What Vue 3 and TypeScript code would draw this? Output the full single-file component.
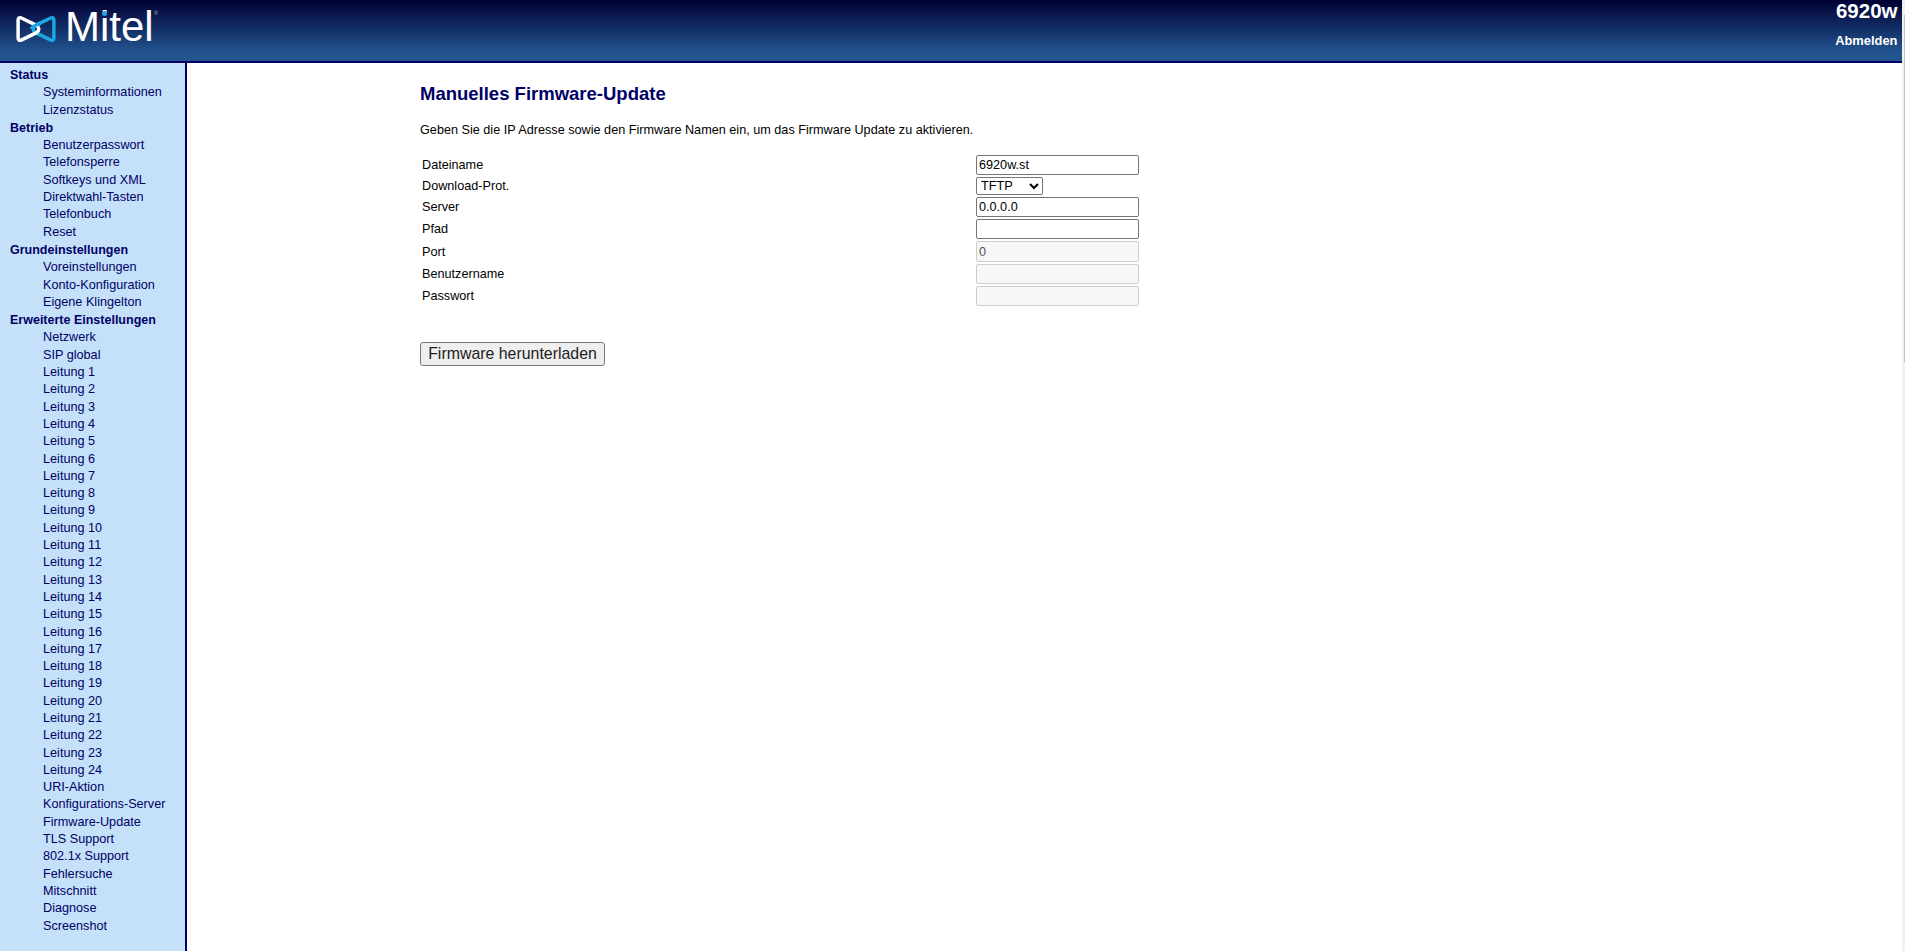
<template>
  <div class="page">
    <div class="window">
      <header class="topbar">
        <div class="logo">
          <svg class="logo-mark" width="40" height="30" viewBox="0 0 38 28" fill="none">
            <path d="M33 3.500L18.500 10.500Q14 14 18.500 17.500L33 24.500Q36 25.500 36 22.500V5.500Q36 2.500 33 3.500Z" stroke="#1ba7e0" stroke-width="3.300" />
            <path d="M5 3.500L19.500 10.500Q24 14 19.500 17.500L5 24.500Q2 25.500 2 22.500V5.500Q2 2.500 5 3.500Z" stroke="#fff" stroke-width="3.300" />
            <path d="M14.800 14Q15 12.200 18.500 10.500L24 7.900" stroke="#1ba7e0" stroke-width="3.300" />
          </svg>
          <div class="logo-word">
            <span class="logo-text">Mitel</span>
            <i class="logo-dot"></i>
          </div>
          <span class="logo-reg">®</span>
        </div>
        <div class="device">
          <div class="model">6920w</div>
          <a class="logout">Abmelden</a>
        </div>
      </header>

      <div class="body">
        <nav class="sidebar">
          <div v-for="group in menu" :key="group.title" class="group">
            <div class="group-title">{{ group.title }}</div>
            <a v-for="item in group.items" :key="item" class="item">{{ item }}</a>
          </div>
        </nav>

        <main class="content">
          <h1>Manuelles Firmware-Update</h1>
          <p class="intro">
            Geben Sie die IP Adresse sowie den Firmware Namen ein, um das Firmware Update zu aktivieren.
          </p>

          <div class="form">
            <label>Dateiname</label>
            <input value="6920w.st" />
            <label>Download-Prot.</label>
            <select>
              <option>TFTP</option>
            </select>
            <label>Server</label>
            <input value="0.0.0.0" />
            <label>Pfad</label>
            <input value="" />
            <label>Port</label>
            <input class="port" value="0" disabled />
            <label>Benutzername</label>
            <input value="" disabled />
            <label>Passwort</label>
            <input value="" disabled />
          </div>

          <button class="download">Firmware herunterladen</button>
        </main>
      </div>
    </div>

    <!-- Rest der Scrollleiste am rechten Rand -->
    <div class="scroll-track">
      <div class="scroll-thumb"></div>
    </div>
  </div>
</template>

<script setup lang="ts">
interface MenuGroup {
  title: string;
  items: string[];
}

const lines = Array.from({ length: 24 }, (_, i) => "Leitung " + (i + 1));

const menu: MenuGroup[] = [
  { title: "Status", items: ["Systeminformationen", "Lizenzstatus"] },
  {
    title: "Betrieb",
    items: [
      "Benutzerpasswort",
      "Telefonsperre",
      "Softkeys und XML",
      "Direktwahl-Tasten",
      "Telefonbuch",
      "Reset",
    ],
  },
  {
    title: "Grundeinstellungen",
    items: ["Voreinstellungen", "Konto-Konfiguration", "Eigene Klingelton"],
  },
  {
    title: "Erweiterte Einstellungen",
    items: [
      "Netzwerk",
      "SIP global",
      ...lines,
      "URI-Aktion",
      "Konfigurations-Server",
      "Firmware-Update",
      "TLS Support",
      "802.1x Support",
      "Fehlersuche",
      "Mitschnitt",
      "Diagnose",
      "Screenshot",
    ],
  },
];
</script>

<style>
html,
body {
  margin: 0;
  height: 100%;
  overflow: hidden;
}
</style>

<style scoped>
.page {
  height: 951px;
  display: flex;
  font-family: "Liberation Sans", Arial, sans-serif;
  font-size: 12.67px;
  color: #000;
  background: #fff;
}

.window {
  flex: 1;
  min-width: 0;
  display: flex;
  flex-direction: column;
}

.scroll-track {
  width: 3px;
  flex: none;
  display: flex;
  justify-content: flex-end;
  padding-top: 15px;
  box-sizing: border-box;
  background: #f1f1f1;
}

.scroll-thumb {
  width: 1px;
  height: 347px;
  background: #c1c1c1;
}

.topbar {
  height: 61px;
  flex: none;
  display: flex;
  justify-content: space-between;
  background: linear-gradient(to bottom, #000033 0%, #22548f 85%, #22548f 100%);
  border-bottom: 2px solid #000066;
}

.logo {
  display: flex;
  align-items: flex-start;
  padding: 14px 0 0 16px;
}

.logo-word {
  position: relative;
  margin: -12px 0 0 9px;
}

.logo-text {
  display: block;
  font-family: "Liberation Sans", Arial, sans-serif;
  font-size: 42px;
  line-height: 50px;
  color: #fff;
}

/* blauer i-Punkt liegt ueber dem weissen */
.logo-dot {
  position: absolute;
  left: 37px;
  top: 9px;
  width: 5px;
  height: 5px;
  border-radius: 50%;
  background: #1ba7e0;
}

.logo-reg {
  font-size: 6px;
  color: #aab;
  line-height: 8px;
  margin: -5px 0 0 0;
}

.device {
  text-align: right;
  color: #fff;
  font-weight: bold;
  padding-right: 4.500px;
}

.model {
  font-size: 20.500px;
  line-height: 22px;
}

.logout {
  display: block;
  font-size: 12.900px;
  line-height: 14px;
  margin-top: 12px;
}

.body {
  flex: 1;
  display: flex;
  min-height: 0;
}

.sidebar {
  width: 185px;
  flex: none;
  padding-top: 3px;
  background: #c5e0f9;
  border-right: 2px solid #000066;
  color: #000066;
}

.group-title {
  font-weight: bold;
  font-size: 12.500px;
  line-height: 18.300px;
  padding-left: 10px;
}

.item {
  display: block;
  line-height: 17.300px;
  padding-left: 43px;
}

.content {
  flex: 1;
  padding: 20px 0 0 233px;
}

h1 {
  margin: 0;
  font-size: 18.500px;
  line-height: 22px;
  font-weight: bold;
  color: #000066;
}

.intro {
  margin: 17.500px 0 0;
  line-height: 14px;
}

.form {
  margin: 18.500px 0 0 2px;
  display: grid;
  grid-template-columns: 554px 163px;
  row-gap: 2px;
  align-items: center;
}

input,
select {
  box-sizing: border-box;
  font-family: "Liberation Sans", Arial, sans-serif;
  font-size: 12.67px;
  margin: 0;
  color: #000;
}

input {
  height: 20px;
  width: 163px;
  padding: 1px 2px;
  border: 1px solid #767676;
  border-radius: 2px;
  background: #fff;
}

input.port {
  height: 21px;
}

input:disabled {
  color: #545454;
  background: #f7f7f7;
  border-color: #cdcdcd;
}

select {
  height: 18px;
  width: 67px;
  padding: 0;
  border: 1px solid #767676;
  border-radius: 2px;
  background: #fff;
}

.download {
  display: block;
  margin-top: 36px;
  width: 185px;
  height: 24px;
  padding: 0;
  box-sizing: border-box;
  font-family: "Liberation Sans", Arial, sans-serif;
  font-size: 15.900px;
  color: #222;
  background: #efefef;
  border: 1px solid #767676;
  border-radius: 3px;
}
</style>
